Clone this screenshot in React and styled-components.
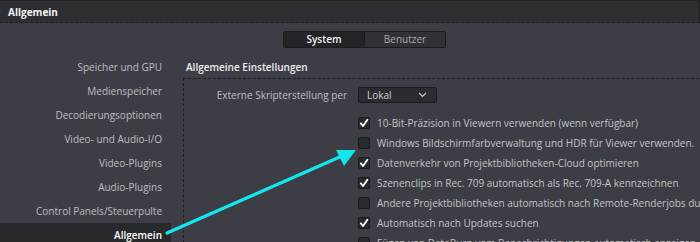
import React from 'react';
import styled, { createGlobalStyle } from 'styled-components';

const GlobalStyle = createGlobalStyle`
  html, body {
    margin: 0;
    padding: 0;
    background: #3d3d45;
  }
  body {
    font-family: "Open Sans", "Liberation Sans", sans-serif;
    font-size: 10px;
    color: #bdbdc0;
  }
`;

const Window = styled.div`
  position: relative;
  width: 700px;
  height: 242px;
  overflow: hidden;
  background: #3d3d45;
  display: flex;
  flex-direction: column;
`;

const TitleBar = styled.div`
  height: 21px;
  flex: none;
  background: #2e2f33;
  border-top: 1px solid #242428;
  border-bottom: 1px dashed #1e1e21;
  border-right: 1px solid #1e1e21;
  display: flex;
  align-items: center;
  padding-left: 8px;
  font-weight: 700;
  color: #f2f2f2;
`;

const TabRow = styled.div`
  height: 32px;
  flex: none;
  display: flex;
  align-items: center;
  padding-left: 283px;
`;

const TabGroup = styled.div`
  display: flex;
  border: 1px solid #1c1c1f;
  border-radius: 2px;
  overflow: hidden;
`;

const Tab = styled.div`
  width: 80px;
  height: 15px;
  display: flex;
  align-items: center;
  justify-content: center;
  background: ${p => (p.active ? '#232428' : '#303136')};
  color: ${p => (p.active ? '#f2f2f2' : '#a9a9ad')};
  font-weight: ${p => (p.active ? 600 : 400)};
  & + & {
    border-left: 1px solid #1c1c1f;
  }
`;

const Body = styled.div`
  flex: 1;
  display: flex;
`;

const Sidebar = styled.ul`
  list-style: none;
  margin: 0;
  padding: 0;
  width: 171px;
  flex: none;
`;

const SideItem = styled.li`
  height: 24px;
  display: flex;
  align-items: center;
  justify-content: flex-end;
  padding-right: 9px;
  background: ${p => (p.active ? '#28292d' : 'transparent')};
  color: ${p => (p.active ? '#ffffff' : '#bdbdc0')};
  font-weight: ${p => (p.active ? 600 : 400)};
`;

const Content = styled.div`
  flex: 1;
  display: flex;
  flex-direction: column;
  padding-left: 12px;
`;

const Heading = styled.div`
  height: 23px;
  display: flex;
  align-items: center;
  padding-left: 3px;
  color: #eeeeee;
  font-weight: 600;
`;

const Panel = styled.div`
  flex: 1;
  border-top: 1px dashed #1f1f22;
  border-left: 1px dashed #1f1f22;
  padding-top: 8px;
  display: flex;
  flex-direction: column;
`;

const FieldRow = styled.div`
  display: flex;
  align-items: center;
  height: 16px;
  margin-bottom: 10px;
`;

const FieldLabel = styled.div`
  width: 163px;
  margin-right: 11px;
  text-align: right;
  white-space: nowrap;
  color: #bdbdc0;
`;

const Select = styled.div`
  width: 79px;
  height: 16px;
  box-sizing: border-box;
  background: #2b2c30;
  border: 1px solid #1c1c1f;
  border-radius: 2px;
  display: flex;
  align-items: center;
  justify-content: space-between;
  padding: 0 9px 0 8px;
  color: #d0d0d2;
`;

const CheckRow = styled.div`
  height: 20px;
  display: flex;
  align-items: center;
  padding-left: 174px;
  white-space: nowrap;
`;

const Box = styled.div`
  width: 12px;
  height: 12px;
  box-sizing: border-box;
  flex: none;
  background: #2a2b2f;
  border: 1px solid #1b1b1e;
  border-radius: 2px;
  display: flex;
  align-items: center;
  justify-content: center;
  margin-right: 7px;
`;

const CheckText = styled.span`
  color: #c4c4c6;
`;

const Overlay = styled.svg`
  position: absolute;
  left: 0;
  top: 0;
  pointer-events: none;
`;

const Check = ({ on }) => (
  <Box>
    {on && (
      <svg width="10" height="10" viewBox="0 0 10 10">
        <path d="M1.8 5.4 L4 8 L8.4 1.8" fill="none" stroke="#ffffff" strokeWidth="1.9" strokeLinecap="round" strokeLinejoin="round" />
      </svg>
    )}
  </Box>
);

const sideItems = [
  'Speicher und GPU',
  'Medienspeicher',
  'Decodierungsoptionen',
  'Video- und Audio-I/O',
  'Video-Plugins',
  'Audio-Plugins',
  'Control Panels/Steuerpulte',
  'Allgemein',
];

const checks = [
  [true, '10-Bit-Präzision in Viewern verwenden (wenn verfügbar)'],
  [false, 'Windows Bildschirmfarbverwaltung und HDR für Viewer verwenden.'],
  [true, 'Datenverkehr von Projektbibliotheken-Cloud optimieren'],
  [true, 'Szenenclips in Rec. 709 automatisch als Rec. 709-A kennzeichnen'],
  [false, 'Andere Projektbibliotheken automatisch nach Remote-Renderjobs durchsuchen'],
  [true, 'Automatisch nach Updates suchen'],
  [false, 'Fügen von DataBurn vom Benachrichtigungen automatisch anzeigen'],
];

export default function App() {
  return (
    <Window>
      <GlobalStyle />
      <TitleBar>Allgemein</TitleBar>
      <TabRow>
        <TabGroup>
          <Tab active>System</Tab>
          <Tab>Benutzer</Tab>
        </TabGroup>
      </TabRow>
      <Body>
        <Sidebar>
          {sideItems.map(s => (
            <SideItem key={s} active={s === 'Allgemein'}>{s}</SideItem>
          ))}
        </Sidebar>
        <Content>
          <Heading>Allgemeine Einstellungen</Heading>
          <Panel>
            <FieldRow>
              <FieldLabel>Externe Skripterstellung per</FieldLabel>
              <Select>
                <span>Lokal</span>
                <svg width="9" height="6" viewBox="0 0 9 6">
                  <path d="M1 1 L4.5 4.5 L8 1" fill="none" stroke="#c8c8ca" strokeWidth="1.2" />
                </svg>
              </Select>
            </FieldRow>
            {checks.map(([on, text]) => (
              <CheckRow key={text}>
                <Check on={on} />
                <CheckText>{text}</CheckText>
              </CheckRow>
            ))}
          </Panel>
        </Content>
      </Body>
      <Overlay width="700" height="242" viewBox="0 0 700 242">
        <line x1="167" y1="233" x2="342" y2="156" stroke="#14e6ee" strokeWidth="3.2" strokeLinecap="round" />
        <polygon points="356,150 336,150 344,166" fill="#14e6ee" />
      </Overlay>
    </Window>
  );
}
